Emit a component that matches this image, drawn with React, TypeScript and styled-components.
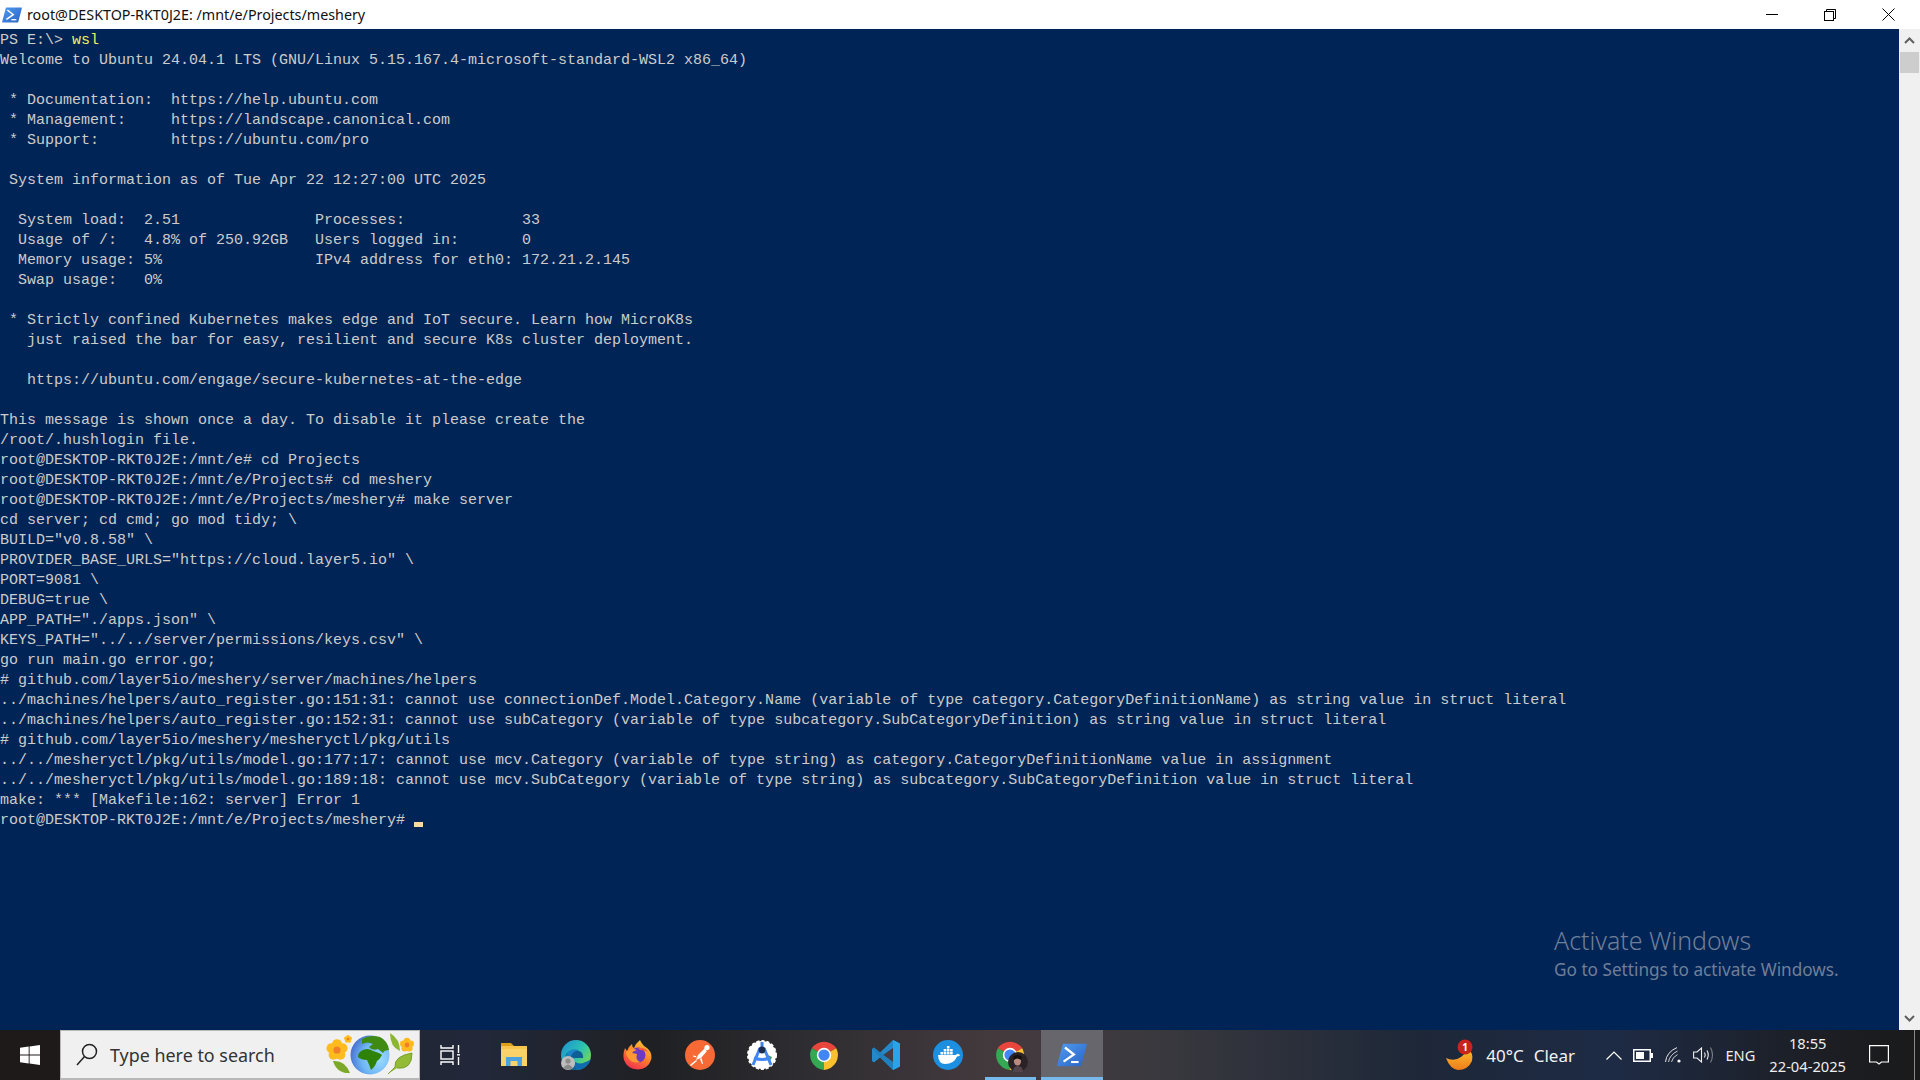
import React from 'react';
import styled, { createGlobalStyle } from 'styled-components';

const GlobalStyle = createGlobalStyle`
  html, body {
    margin: 0;
    padding: 0;
    width: 1920px;
    height: 1080px;
    overflow: hidden;
    background: #012456;
  }
`;

const LINES = [
  'PS E:\\> @wsl',
  'Welcome to Ubuntu 24.04.1 LTS (GNU/Linux 5.15.167.4-microsoft-standard-WSL2 x86_64)',
  '',
  ' * Documentation:  https://help.ubuntu.com',
  ' * Management:     https://landscape.canonical.com',
  ' * Support:        https://ubuntu.com/pro',
  '',
  ' System information as of Tue Apr 22 12:27:00 UTC 2025',
  '',
  '  System load:  2.51               Processes:             33',
  '  Usage of /:   4.8% of 250.92GB   Users logged in:       0',
  '  Memory usage: 5%                 IPv4 address for eth0: 172.21.2.145',
  '  Swap usage:   0%',
  '',
  ' * Strictly confined Kubernetes makes edge and IoT secure. Learn how MicroK8s',
  '   just raised the bar for easy, resilient and secure K8s cluster deployment.',
  '',
  '   https://ubuntu.com/engage/secure-kubernetes-at-the-edge',
  '',
  'This message is shown once a day. To disable it please create the',
  '/root/.hushlogin file.',
  'root@DESKTOP-RKT0J2E:/mnt/e# cd Projects',
  'root@DESKTOP-RKT0J2E:/mnt/e/Projects# cd meshery',
  'root@DESKTOP-RKT0J2E:/mnt/e/Projects/meshery# make server',
  'cd server; cd cmd; go mod tidy; \\',
  'BUILD="v0.8.58" \\',
  'PROVIDER_BASE_URLS="https://cloud.layer5.io" \\',
  'PORT=9081 \\',
  'DEBUG=true \\',
  'APP_PATH="./apps.json" \\',
  'KEYS_PATH="../../server/permissions/keys.csv" \\',
  'go run main.go error.go;',
  '# github.com/layer5io/meshery/server/machines/helpers',
  '../machines/helpers/auto_register.go:151:31: cannot use connectionDef.Model.Category.Name (variable of type category.CategoryDefinitionName) as string value in struct literal',
  '../machines/helpers/auto_register.go:152:31: cannot use subCategory (variable of type subcategory.SubCategoryDefinition) as string value in struct literal',
  '# github.com/layer5io/meshery/mesheryctl/pkg/utils',
  '../../mesheryctl/pkg/utils/model.go:177:17: cannot use mcv.Category (variable of type string) as category.CategoryDefinitionName value in assignment',
  '../../mesheryctl/pkg/utils/model.go:189:18: cannot use mcv.SubCategory (variable of type string) as subcategory.SubCategoryDefinition value in struct literal',
  'make: *** [Makefile:162: server] Error 1',
];

const PowerShellIcon = ({ size }: { size: number }) => (
  <svg width={size} height={size} viewBox="0 0 32 32">
    <defs>
      <linearGradient id="psGrad" x1="0" y1="0" x2="1" y2="1">
        <stop offset="0" stopColor="#4f9bf0" />
        <stop offset="1" stopColor="#2a63c4" />
      </linearGradient>
    </defs>
    <path d="M7 4 L31 4 Q32 4 31.7 5.5 L26 27 Q25.6 28 24.5 28 L1 28 Q0 28 0.3 26.5 L6 5 Q6.2 4 7 4 Z" fill="url(#psGrad)" />
    <path d="M8.5 8 L18 15.5 L7 23" fill="none" stroke="#fff" strokeWidth="2.4" />
    <path d="M15 23.5 H23" stroke="#fff" strokeWidth="2.2" />
  </svg>
);

const WindowsLogo = () => (
  <svg width="20" height="20" viewBox="0 0 20 20" fill="#fff">
    <path d="M0 2.8 L8.7 1.6 V9.5 H0 Z" />
    <path d="M9.6 1.5 L20 0 V9.5 H9.6 Z" />
    <path d="M0 10.5 H8.7 V18.4 L0 17.2 Z" />
    <path d="M9.6 10.5 H20 V20 L9.6 18.5 Z" />
  </svg>
);

const SearchGlass = () => (
  <svg width="22" height="24" viewBox="0 0 22 24" fill="none" stroke="#222" strokeWidth="1.5">
    <circle cx="13.5" cy="8.5" r="7" />
    <path d="M8.5 13.5 L1 22" />
  </svg>
);

const Flower = ({ cx, cy, r, c }: { cx: number; cy: number; r: number; c: string }) => (
  <g>
    {[0, 72, 144, 216, 288].map(a => (
      <circle
        key={a}
        cx={cx + Math.sin((a * Math.PI) / 180) * r * 0.62}
        cy={cy - Math.cos((a * Math.PI) / 180) * r * 0.62}
        r={r * 0.52}
        fill={c}
      />
    ))}
    <circle cx={cx} cy={cy} r={r * 0.38} fill="#f07f2a" />
  </g>
);

const GlobeDoodle = () => (
  <svg width="100" height="50" viewBox="0 0 100 50">
    <defs>
      <radialGradient id="globeBlue" cx="0.72" cy="0.6" r="0.8">
        <stop offset="0" stopColor="#9cdcff" />
        <stop offset="0.55" stopColor="#6fb6f5" />
        <stop offset="1" stopColor="#3f62c8" />
      </radialGradient>
    </defs>
    <circle cx="50" cy="25" r="19.5" fill="url(#globeBlue)" />
    <path d="M42 9 Q50 4 60 7 Q68 11 69 20 Q64 20 63 23 L58 19 Q52 21 49 17 L53 14 Q47 11 42 14 Z" fill="#3f8a12" />
    <path d="M41 21 Q47 17 53 21 Q60 23 62 25 Q60 29 57 31 Q55 37 51 40 Q49 34 47 30 Q41 30 38 27 Q38 23 41 21 Z" fill="#2f8208" />
    <Flower cx={17} cy={20} r={9.5} c="#fdbb1f" />
    <Flower cx={28} cy={9} r={3.6} c="#fdbb1f" />
    <Flower cx={87} cy={15} r={6.3} c="#fdbb1f" />
    <path d="M13 31 Q25 30 30 43 Q17 44 13 31 Z" fill="#7da92a" />
    <path d="M70 3 Q80 9 80 21 Q70 17 70 3 Z" fill="#8cb532" />
    <path d="M68 44 Q74 38 75 37 Q74 26 92 23 Q92 40 77 38" fill="#93bb35" stroke="#7a9f28" strokeWidth="1" />
  </svg>
);

const TaskViewIcon = () => (
  <TaskViewSvg width="20" height="22" viewBox="0 0 20 22" fill="none" stroke="#fff" strokeWidth="1.4">
    <path d="M1 1 V4 H13 V1" />
    <rect x="1" y="7" width="12" height="8" />
    <path d="M1 21 V18 H13 V21" />
    <path d="M18.5 1 V9 M18.5 13 V21" />
    <path d="M17 10.8 H20" />
  </TaskViewSvg>
);

const ExplorerIcon = () => (
  <svg width="30" height="30" viewBox="0 0 30 30">
    <path d="M2 3 H12 L15 6 H2 Z" fill="#dc9f1c" />
    <path d="M2 6 H28 V26 H2 Z" fill="#fbd26a" />
    <path d="M2 6 H28 V9 H2 Z" fill="#f7c44c" />
    <path d="M7 26 V17 H23 V26 H18.5 V21 H11.5 V26 Z" fill="#4aa2e2" />
  </svg>
);

const EdgeIcon = () => (
  <svg width="30" height="30" viewBox="0 0 30 30">
    <defs>
      <linearGradient id="edgeTop" x1="0" y1="0" x2="1" y2="0.7">
        <stop offset="0" stopColor="#1c8fd6" />
        <stop offset="0.6" stopColor="#2cc3b0" />
        <stop offset="1" stopColor="#7cd94f" />
      </linearGradient>
    </defs>
    <circle cx="15" cy="15" r="15" fill="url(#edgeTop)" />
    <path d="M4 22 Q2 11 14 10 Q23 11 22 18 L14 18 Q9 18 11 23 Q14 28 24 26 Q16 32 9 29 Z" fill="#0f5f96" />
    <path d="M8 11 Q12 8 18 10 Q12 11 10 16 Q7 20 8 27 Q2 18 8 11 Z" fill="#1b85c8" />
    <path d="M14 22 Q20 26 30 19 Q27 28 18 30 Q12 29 14 22 Z" fill="#0e6bad" />
    <circle cx="7" cy="23" r="7" fill="#bdbdbd" />
    <circle cx="7" cy="21" r="2.6" fill="#8b8b8b" />
    <path d="M2 28 Q7 21 12 28 Q7 31 2 28 Z" fill="#8b8b8b" />
  </svg>
);

const FirefoxIcon = () => (
  <svg width="30" height="30" viewBox="0 0 30 30">
    <defs>
      <linearGradient id="ffOuter" x1="0.8" y1="0" x2="0.3" y2="1">
        <stop offset="0" stopColor="#ffc83a" />
        <stop offset="0.45" stopColor="#ff8a2a" />
        <stop offset="1" stopColor="#f0304f" />
      </linearGradient>
    </defs>
    <path d="M17 0 Q19 5 24 8 Q30 13 28 20 Q25 29 15 29.5 Q4 29 1 20 Q-0.5 14 2 8 L4 11 Q5 7 9 4 Q9 7 11 8 Q13 3 17 0 Z" fill="url(#ffOuter)" />
    <circle cx="15" cy="15" r="7.5" fill="#6d3ac0" />
    <path d="M3 12 Q8 7 14 10 Q10 11 9 13 L14 14 Q12 20 17 22 Q10 24 6 19 Q3 16 3 12 Z" fill="#ff9a2e" />
    <path d="M15 8 Q22 7 25 12 Q22 10 17 10 Z" fill="#ff5a3a" />
  </svg>
);

const PostmanIcon = () => (
  <svg width="30" height="30" viewBox="0 0 30 30">
    <circle cx="15" cy="15" r="15" fill="#f76935" />
    <circle cx="22" cy="7.5" r="2.6" fill="#fff" />
    <path d="M20 8 L13 15 L11 20 L16 18 L22 11 Q20 10 20 8 Z" fill="#fff" />
    <path d="M11 20 L5 25 L6 26 L12 21 Z M15 19 L17 24 L18 23.5 L16.5 18 Z M11 16 L8 15.5 L8 16.5 L11.5 17.5 Z" fill="#fff" />
  </svg>
);

const AndroidStudioIcon = () => (
  <svg width="30" height="30" viewBox="0 0 30 30">
    <circle cx="15" cy="15" r="14" fill="#fff" stroke="#fff" strokeWidth="2" strokeDasharray="3 2" />
    <path d="M21 15 L25 17 L23 21 L19 19 Z" fill="#3ba55d" />
    <path d="M15 2 L15 8" stroke="#3f7fe0" strokeWidth="3" />
    <path d="M13 8 L6 25 M17 8 L24 25" stroke="#4285f4" strokeWidth="3" fill="none" />
    <path d="M7 18 Q15 21 23 18" stroke="#4285f4" strokeWidth="3" fill="none" />
    <circle cx="15" cy="10" r="3.4" fill="#1d2b4f" />
  </svg>
);

const ChromeIcon = () => (
  <svg width="30" height="30" viewBox="0 0 48 48">
    <path d="M24 24 L4.4 13 A24 24 0 0 1 43.6 13 Z" fill="#e8453c" />
    <path d="M24 24 L4.4 13 A24 24 0 0 0 24 48 Z" fill="#34a853" />
    <path d="M24 24 L43.6 13 A24 24 0 0 1 24 48 Z" fill="#fbc02d" />
    <circle cx="24" cy="24" r="11.5" fill="#fff" />
    <circle cx="24" cy="24" r="9" fill="#4285f4" />
  </svg>
);

const VSCodeIcon = () => (
  <svg width="30" height="30" viewBox="0 0 30 30">
    <path d="M22 0 L29 3.5 V26.5 L22 30 L9 17.5 L3 22.5 L1 21 V9 L3 7.5 L9 12.5 Z" fill="#2489ca" />
    <path d="M22 0 L29 3.5 V26.5 L22 30 Z" fill="#2ba3e8" />
    <path d="M22 8 V22 L12 15 Z" fill="#443c42" />
    <path d="M1 9 L3 7.5 L22 22 V30 Z" fill="#1f7cb8" opacity="0.7" />
  </svg>
);

const DockerIcon = () => (
  <svg width="30" height="30" viewBox="0 0 30 30">
    <circle cx="15" cy="15" r="15" fill="#1d8fe1" />
    <path d="M5 15 H23 Q24 13 25.5 14 Q27 14.5 27 15.5 Q25.5 16.5 24 16.5 Q21 24 12 24 Q5.5 24 5 15 Z" fill="#fff" />
    <path d="M7.5 12 h2.6 v2.4 h-2.6 Z M10.7 12 h2.6 v2.4 h-2.6 Z M13.9 12 h2.6 v2.4 h-2.6 Z M17.1 12 h2.6 v2.4 h-2.6 Z M10.7 9 h2.6 v2.4 h-2.6 Z M13.9 9 h2.6 v2.4 h-2.6 Z M17.1 9 h2.6 v2.4 h-2.6 Z M13.9 6 h2.6 v2.4 h-2.6 Z" fill="#fff" />
  </svg>
);

const ChromeProfileIcon = () => (
  <ProfileWrap>
    <ChromeIcon />
    <Avatar viewBox="0 0 20 20" width="20" height="20">
      <circle cx="10" cy="10" r="10" fill="#2a2226" />
      <ellipse cx="9.5" cy="9" rx="3.6" ry="4.6" fill="#b98a80" />
      <path d="M5 20 Q5 14 10 14 Q15 14 15 20 Z" fill="#54454a" />
      <path d="M5 5 Q10 1 14 5 L13 8 Q9 5 6 8 Z" fill="#15100f" />
    </Avatar>
  </ProfileWrap>
);

const WeatherIcon = () => (
  <svg width="32" height="32" viewBox="0 0 32 32">
    <defs>
      <linearGradient id="moon" x1="0" y1="0" x2="0" y2="1">
        <stop offset="0" stopColor="#fcc02e" />
        <stop offset="1" stopColor="#ee7d1c" />
      </linearGradient>
    </defs>
    <path d="M2 19 Q10 23 17 18 Q23 13 23 9 Q30 14 28 22 Q24 31 14 31 Q6 30 2 19 Z" fill="url(#moon)" />
    <circle cx="21" cy="8" r="7.5" fill="#c8231d" />
    <BadgeText x="21" y="11.5" textAnchor="middle">1</BadgeText>
  </svg>
);

const BatteryIcon = () => (
  <svg width="20" height="13" viewBox="0 0 20 13">
    <rect x="0.75" y="0.75" width="16.5" height="11.5" fill="none" stroke="#fff" strokeWidth="1.5" />
    <rect x="3" y="3" width="8" height="7" fill="#fff" />
    <rect x="18" y="4" width="2" height="5" fill="#fff" />
  </svg>
);

const WifiIcon = () => (
  <svg width="17" height="16" viewBox="0 0 17 16" fill="none" stroke="#e8e8e8" strokeWidth="1">
    <path d="M0.5 15 Q1.5 5 12 0.6" />
    <path d="M3.5 15 Q4.5 8 12.5 4" opacity="0.85" />
    <path d="M6.5 15 Q7.5 10 12.5 7.6" opacity="0.85" />
    <circle cx="14" cy="14" r="1.6" fill="#fff" stroke="none" />
  </svg>
);

const VolumeIcon = () => (
  <svg width="21" height="16" viewBox="0 0 21 16" fill="none" stroke="#f0f0f0" strokeWidth="1.1">
    <path d="M0.6 5 H4 L8.5 1 V15 L4 11 H0.6 Z" />
    <path d="M11.5 5.5 Q13 8 11.5 10.5" />
    <path d="M14 3.5 Q16.5 8 14 12.5" />
    <path d="M17.5 0.5 Q21.5 8 17.5 15.5" opacity="0.45" />
  </svg>
);

const NotificationIcon = () => (
  <svg width="20" height="20" viewBox="0 0 20 20" fill="none" stroke="#fff" strokeWidth="1.2">
    <path d="M0.6 0.6 H19.4 V17 H12.5 L10 19 L7.5 17 H0.6 Z" />
  </svg>
);

const TASK_ICONS = [
  { key: 'view', node: <TaskViewIcon /> },
  { key: 'explorer', node: <ExplorerIcon /> },
  { key: 'edge', node: <EdgeIcon /> },
  { key: 'firefox', node: <FirefoxIcon /> },
  { key: 'postman', node: <PostmanIcon /> },
  { key: 'studio', node: <AndroidStudioIcon /> },
  { key: 'chrome', node: <ChromeIcon /> },
  { key: 'vscode', node: <VSCodeIcon /> },
  { key: 'docker', node: <DockerIcon /> },
  { key: 'profile', node: <ChromeProfileIcon />, running: true },
  { key: 'pwsh', node: <PowerShellIcon size={30} />, running: true, active: true },
];

export default function App() {
  return (
    <Screen>
      <GlobalStyle />
      <TitleBar>
        <TitleIcon>
          <PowerShellIcon size={20} />
        </TitleIcon>
        <TitleText>root@DESKTOP-RKT0J2E: /mnt/e/Projects/meshery</TitleText>
        <WindowButton>
          <svg width="12" height="2" viewBox="0 0 12 2">
            <rect width="12" height="1" fill="#000" />
          </svg>
        </WindowButton>
        <WindowButton>
          <svg width="12" height="12" viewBox="0 0 12 12" fill="none" stroke="#000">
            <rect x="0.5" y="2.5" width="9" height="9" />
            <path d="M2.5 2.5 V0.5 H11.5 V9.5 H9.5" />
          </svg>
        </WindowButton>
        <WindowButton>
          <svg width="13" height="13" viewBox="0 0 13 13" stroke="#000">
            <path d="M0.5 0.5 L12.5 12.5 M12.5 0.5 L0.5 12.5" />
          </svg>
        </WindowButton>
      </TitleBar>

      <Body>
        <Terminal>
          {LINES.map((line, i) => {
            if (line.includes('@wsl')) {
              return (
                <Line key={i}>
                  PS E:\&gt; <Command>wsl</Command>
                </Line>
              );
            }
            return <Line key={i}>{line}</Line>;
          })}
          <Line>
            root@DESKTOP-RKT0J2E:/mnt/e/Projects/meshery# <Cursor />
          </Line>
          <Activation>
            <ActivationTitle>Activate Windows</ActivationTitle>
            <ActivationHint>Go to Settings to activate Windows.</ActivationHint>
          </Activation>
        </Terminal>
        <Scrollbar>
          <ArrowButton>
            <svg width="11" height="7" viewBox="0 0 11 7" fill="none" stroke="#606060" strokeWidth="2">
              <path d="M1 6 L5.5 1.5 L10 6" />
            </svg>
          </ArrowButton>
          <Thumb />
          <ArrowButton $bottom>
            <svg width="11" height="7" viewBox="0 0 11 7" fill="none" stroke="#606060" strokeWidth="2">
              <path d="M1 1 L5.5 5.5 L10 1" />
            </svg>
          </ArrowButton>
        </Scrollbar>
      </Body>

      <Taskbar>
        <StartButton>
          <WindowsLogo />
        </StartButton>
        <SearchBox>
          <SearchGlass />
          <SearchText>Type here to search</SearchText>
          <Doodle>
            <GlobeDoodle />
          </Doodle>
        </SearchBox>
        {TASK_ICONS.map(item => (
          <TaskCell key={item.key} $active={item.active} $running={item.running}>
            {item.node}
          </TaskCell>
        ))}
        <Tray>
          <WeatherSlot>
            <WeatherIcon />
            <WeatherTemp>40°C</WeatherTemp>
            <WeatherTemp>Clear</WeatherTemp>
          </WeatherSlot>
          <TrayIcons>
            <svg width="16" height="9" viewBox="0 0 16 9" fill="none" stroke="#fff" strokeWidth="1.2">
              <path d="M0.5 8.5 L8 1 L15.5 8.5" />
            </svg>
            <BatteryIcon />
            <WifiIcon />
            <VolumeIcon />
          </TrayIcons>
          <Language>ENG</Language>
          <Clock>
            <span>18:55</span>
            <span>22-04-2025</span>
          </Clock>
          <NotificationSlot>
            <NotificationIcon />
          </NotificationSlot>
          <ShowDesktop />
        </Tray>
      </Taskbar>
    </Screen>
  );
}

// ==================== Styled Components ====================
const Screen = styled.div`
  width: 1920px;
  height: 1080px;
  display: flex;
  flex-direction: column;
  overflow: hidden;
`;

const TitleBar = styled.header`
  height: 29px;
  flex: none;
  display: flex;
  align-items: center;
  background: #fff;
`;

const TitleIcon = styled.div`
  width: 27px;
  padding-left: 2px;
  box-sizing: border-box;
  display: flex;
  align-items: center;
`;

const TitleText = styled.div`
  flex: 1;
  font-family: 'Noto Sans', 'Open Sans', sans-serif;
  font-size: 14.3px;
  line-height: 29px;
  color: #111;
  white-space: nowrap;
`;

const WindowButton = styled.div`
  width: 58px;
  height: 29px;
  display: flex;
  align-items: center;
  justify-content: center;
  &:last-child {
    margin-right: 3px;
  }
`;

const Body = styled.main`
  flex: 1;
  min-height: 0;
  display: flex;
`;

const Terminal = styled.div`
  position: relative;
  flex: 1;
  padding-top: 2px;
  background: #012456;
  color: #cccccc;
  font-family: 'Liberation Mono', 'DejaVu Sans Mono', monospace;
  font-size: 15px;
`;

const Line = styled.div`
  height: 20px;
  line-height: 20px;
  white-space: pre;
`;

const Command = styled.span`
  color: #f0f060;
`;

const Cursor = styled.span`
  display: inline-block;
  width: 9px;
  height: 5px;
  background: #fdd9a0;
  vertical-align: -3px;
`;

const Activation = styled.div`
  position: absolute;
  left: 1554px;
  top: 894px;
  font-family: 'Noto Sans', 'Open Sans', sans-serif;
  color: #6f7f98;
`;

const ActivationTitle = styled.div`
  font-size: 24.9px;
  line-height: 34px;
  margin-bottom: 1px;
  font-weight: 300;
`;

const ActivationHint = styled.div`
  font-size: 17.2px;
  line-height: 24px;
`;

const Scrollbar = styled.aside`
  width: 21px;
  flex: none;
  display: flex;
  flex-direction: column;
  background: #f0f0f0;
`;

const ArrowButton = styled.div<{ $bottom?: boolean }>`
  height: 23px;
  flex: none;
  display: flex;
  align-items: center;
  justify-content: center;
  margin-top: ${p => (p.$bottom ? 'auto' : '0')};
`;

const Thumb = styled.div`
  height: 21px;
  margin: 0 1px;
  background: #cdcdcd;
`;

const Taskbar = styled.footer`
  height: 50px;
  flex: none;
  display: flex;
  align-items: stretch;
  background: linear-gradient(
    90deg,
    #1e1a1a 0%,
    #22283a 25%,
    #1f2023 34%,
    #2e2d31 42%,
    #443a3e 52%,
    #3a393e 60%,
    #1d2738 74%,
    #1e2b45 84%,
    #1c1f26 94%,
    #1a1a1a 100%
  );
`;

const StartButton = styled.div`
  width: 60px;
  flex: none;
  display: flex;
  align-items: center;
  justify-content: center;
  background: #1f1a1a;
`;

const SearchBox = styled.div`
  position: relative;
  width: 360px;
  flex: none;
  margin-right: 1px;
  box-sizing: border-box;
  display: flex;
  align-items: center;
  padding-left: 15px;
  gap: 12px;
  background: #f0f0f0;
  border: 1px solid #b8b8b8;
  border-bottom-width: 2px;
  overflow: hidden;
`;

const SearchText = styled.div`
  font-family: 'Noto Sans', 'Open Sans', sans-serif;
  font-size: 17.9px;
  color: #333;
  white-space: nowrap;
`;

const Doodle = styled.div`
  position: absolute;
  right: -1px;
  top: -1px;
  height: 50px;
`;

const TaskViewSvg = styled.svg`
  margin-right: 4px;
`;

const TaskCell = styled.div<{ $active?: boolean; $running?: boolean }>`
  position: relative;
  width: 62px;
  flex: none;
  display: flex;
  align-items: center;
  justify-content: center;
  background: ${p => (p.$active ? '#67666c' : 'transparent')};

  &::after {
    content: '';
    display: ${p => (p.$running ? 'block' : 'none')};
    position: absolute;
    bottom: 0;
    height: 3px;
    background: #76b9ed;
    left: ${p => (p.$active ? '0' : '6px')};
    right: ${p => (p.$active ? '0' : '5px')};
  }
`;

const ProfileWrap = styled.div`
  position: relative;
  width: 30px;
  height: 30px;
`;

const Avatar = styled.svg`
  position: absolute;
  right: -3px;
  bottom: -2px;
`;

const BadgeText = styled.text`
  font-family: 'Noto Sans', sans-serif;
  font-size: 10px;
  font-weight: 700;
  fill: #fff;
`;

const Tray = styled.div`
  flex: 1;
  display: flex;
  align-items: center;
  justify-content: flex-end;
  color: #fff;
  font-family: 'Noto Sans', 'Open Sans', sans-serif;
`;

const WeatherSlot = styled.div`
  display: flex;
  align-items: center;
  gap: 10px;
  margin-right: 31px;
`;

const WeatherTemp = styled.span`
  font-size: 17px;
  color: #f2f2f2;
`;

const TrayIcons = styled.div`
  display: flex;
  align-items: center;
  gap: 11.5px;
  margin-right: 11px;
`;

const Language = styled.div`
  font-size: 14.6px;
  color: #eee;
  margin-right: 14px;
`;

const Clock = styled.div`
  display: flex;
  flex-direction: column;
  align-items: center;
  font-size: 14.7px;
  line-height: 23px;
  color: #eee;
  margin-right: 23px;
`;

const NotificationSlot = styled.div`
  display: flex;
  margin-right: 25px;
`;

const ShowDesktop = styled.div`
  width: 1px;
  align-self: stretch;
  background: #8a8a8a;
  margin-right: 5px;
`;
